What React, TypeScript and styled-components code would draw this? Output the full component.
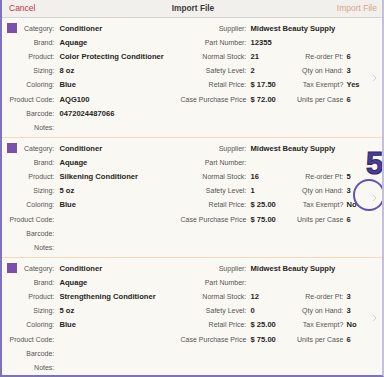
import React from "react";
import styled, { createGlobalStyle } from "styled-components";

const Global = createGlobalStyle`
  html, body { margin: 0; padding: 0; background: #ffffff; }
  body { font-family: "Liberation Sans", Arial, sans-serif; }
  * { box-sizing: border-box; }
`;

const Frame = styled.div`
  position: relative;
  width: 384px;
  height: 377px;
  overflow: hidden;
  background: #faf8f3;
  border-left: 2px solid #7d72bd;
  border-right: 2px solid #c4bfdc;
  border-bottom: 2px solid #7d72bd;
  display: flex;
  flex-direction: column;
`;

const Header = styled.div`
  flex: none;
  height: 18px;
  display: grid;
  grid-template-columns: 1fr auto 1fr;
  align-items: center;
  padding: 0 5px 1px 7px;
  background: #f2f0ec;
  border-bottom: 1px solid #d8d5d0;
  font-size: 8.5px;
`;

const HeaderButton = styled.span<{ $tone: "cancel" | "action" }>`
  color: ${(p) => (p.$tone === "cancel" ? "#be3548" : "#dba37f")};
  justify-self: ${(p) => (p.$tone === "cancel" ? "start" : "end")};
`;

const Title = styled.span`
  font-weight: bold;
  color: #3d3b3a;
  font-size: 8.3px;
`;

const List = styled.div`
  flex: none;
  display: flex;
  flex-direction: column;
`;

const Card = styled.div`
  flex: none;
  height: 120px;
  display: flex;
  align-items: center;
  padding: 3px 5px 3px 0;
  border-bottom: 1px solid #f5d9bf;
`;

const Fields = styled.div`
  display: grid;
  grid-template-columns: 53px 125px 67px 48px 49px 24px;
  grid-template-rows: repeat(8, 14.2px);
  align-self: flex-start;
`;

const Label = styled.div<{ $col: number; $row: number }>`
  grid-column: ${(p) => p.$col};
  grid-row: ${(p) => p.$row};
  display: flex;
  align-items: center;
  justify-content: flex-end;
  padding-right: 0.7px;
  font-size: 7px;
  color: #565553;
  white-space: nowrap;
`;

const CategoryLabel = styled(Label)`
  justify-content: space-between;
  padding-left: 5px;
`;

const Swatch = styled.span`
  width: 10px;
  height: 10px;
  background: #7d4fa8;
  flex: none;
`;

const Value = styled.div<{ $col: number; $row: number; $span?: number; $pad: number }>`
  grid-column: ${(p) => p.$col} / span ${(p) => p.$span ?? 1};
  grid-row: ${(p) => p.$row};
  display: flex;
  align-items: center;
  padding-left: ${(p) => p.$pad}px;
  font-size: 7.6px;
  font-weight: bold;
  color: #262523;
  white-space: nowrap;
`;

const Chevron = styled.div`
  margin-left: auto;
  width: 5px;
  height: 8px;
  display: flex;
  align-items: center;
  justify-content: center;
`;

const Badge = styled.div`
  position: absolute;
  left: 364px;
  top: 148px;
  font-family: "Liberation Sans", Arial, sans-serif;
  font-weight: 900;
  font-size: 31px;
  line-height: 1;
  color: #4a3e98;
  -webkit-text-stroke: 1.1px #30286e;
`;

const Ring = styled.div`
  position: absolute;
  left: 351px;
  top: 179px;
  width: 32px;
  height: 32px;
  border-radius: 50%;
  border: 2px solid #5e52b4;
`;

type Item = {
  category: string;
  brand: string;
  product: string;
  sizing: string;
  coloring: string;
  code: string;
  barcode: string;
  notes: string;
  supplier: string;
  part: string;
  normal: string;
  reorder: string;
  safety: string;
  qty: string;
  retail: string;
  tax: string;
  casePrice: string;
  units: string;
};

const items: Item[] = [
  {
    category: "Conditioner",
    brand: "Aquage",
    product: "Color Protecting Conditioner",
    sizing: "8 oz",
    coloring: "Blue",
    code: "AQG100",
    barcode: "0472024487066",
    notes: "",
    supplier: "Midwest Beauty Supply",
    part: "12355",
    normal: "21",
    reorder: "6",
    safety: "2",
    qty: "3",
    retail: "$ 17.50",
    tax: "Yes",
    casePrice: "$ 72.00",
    units: "6",
  },
  {
    category: "Conditioner",
    brand: "Aquage",
    product: "Silkening Conditioner",
    sizing: "5 oz",
    coloring: "Blue",
    code: "",
    barcode: "",
    notes: "",
    supplier: "Midwest Beauty Supply",
    part: "",
    normal: "16",
    reorder: "5",
    safety: "1",
    qty: "3",
    retail: "$ 25.00",
    tax: "No",
    casePrice: "$ 75.00",
    units: "6",
  },
  {
    category: "Conditioner",
    brand: "Aquage",
    product: "Strengthening Conditioner",
    sizing: "5 oz",
    coloring: "Blue",
    code: "",
    barcode: "",
    notes: "",
    supplier: "Midwest Beauty Supply",
    part: "",
    normal: "12",
    reorder: "3",
    safety: "0",
    qty: "3",
    retail: "$ 25.00",
    tax: "No",
    casePrice: "$ 75.00",
    units: "6",
  },
];

const ChevronIcon = () => (
  <svg width="5" height="8" viewBox="0 0 5 8">
    <path d="M1 0.8 L4 4 L1 7.2" fill="none" stroke="#c9c7c4" strokeWidth="0.9" />
  </svg>
);

const ProductCard = ({ item }: { item: Item }) => {
  const left: [string, string][] = [
    ["Brand:", item.brand],
    ["Product:", item.product],
    ["Sizing:", item.sizing],
    ["Coloring:", item.coloring],
    ["Product Code:", item.code],
    ["Barcode:", item.barcode],
    ["Notes:", item.notes],
  ];
  const right: [string, string][] = [
    ["Part Number:", item.part],
    ["Normal Stock:", item.normal],
    ["Safety Level:", item.safety],
    ["Retail Price:", item.retail],
    ["Case Purchase Price", item.casePrice],
  ];
  const extra: [string, string][] = [
    ["Re-order Pt:", item.reorder],
    ["Qty on Hand:", item.qty],
    ["Tax Exempt?", item.tax],
    ["Units per Case", item.units],
  ];
  return (
    <Card>
      <Fields>
        <CategoryLabel $col={1} $row={1}>
          <Swatch />
          Category:
        </CategoryLabel>
        <Value $col={2} $row={1} $pad={4.5}>
          {item.category}
        </Value>
        {left.map(([l, v], i) => (
          <React.Fragment key={l}>
            <Label $col={1} $row={i + 2}>{l}</Label>
            <Value $col={2} $row={i + 2} $pad={4.5}>{v}</Value>
          </React.Fragment>
        ))}
        <Label $col={3} $row={1}>Supplier:</Label>
        <Value $col={4} $row={1} $span={3} $pad={3.5}>
          {item.supplier}
        </Value>
        {right.map(([l, v], i) => (
          <React.Fragment key={l}>
            <Label $col={3} $row={i + 2}>{l}</Label>
            <Value $col={4} $row={i + 2} $pad={3.5}>{v}</Value>
          </React.Fragment>
        ))}
        {extra.map(([l, v], i) => (
          <React.Fragment key={l}>
            <Label $col={5} $row={i + 3}>{l}</Label>
            <Value $col={6} $row={i + 3} $pad={2.5}>{v}</Value>
          </React.Fragment>
        ))}
      </Fields>
      <Chevron>
        <ChevronIcon />
      </Chevron>
    </Card>
  );
};

export default function App() {
  return (
    <>
      <Global />
      <Frame>
        <Header>
          <HeaderButton $tone="cancel">Cancel</HeaderButton>
          <Title>Import File</Title>
          <HeaderButton $tone="action">Import File</HeaderButton>
        </Header>
        <List>
          {items.map((it, i) => (
            <ProductCard key={i} item={it} />
          ))}
        </List>
        <Badge>5</Badge>
        <Ring />
      </Frame>
    </>
  );
}
